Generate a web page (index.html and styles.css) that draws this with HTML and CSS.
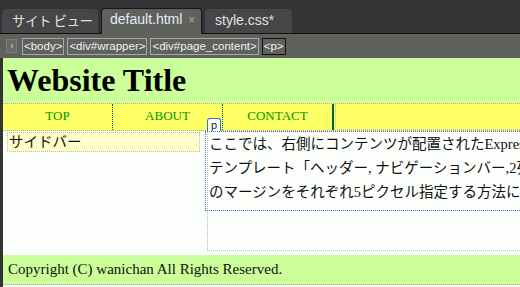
FILE: index.html
```html
<!DOCTYPE html>
<html lang="ja">
<head>
  <meta charset="UTF-8" />
  <title>default.html</title>
  <link rel="stylesheet" href="styles.css">
</head>
<body>
  <div class="tabs">
    <div class="tab tab-site">サイト ビュー</div>
    <div class="tab tab-active">default.html <span class="close">×</span></div>
    <div class="tab tab-css">style.css*</div>
  </div>

  <div class="crumbs">
    <span class="crumb-back"></span>
    <span class="crumb">&lt;body&gt;</span>
    <span class="crumb">&lt;div#wrapper&gt;</span>
    <span class="crumb">&lt;div#page_content&gt;</span>
    <span class="crumb crumb-current">&lt;p&gt;</span>
  </div>

  <!-- design view -->
  <div class="design">
    <div class="site-header">
      <h1>Website Title</h1>
    </div>

    <ul class="nav">
      <li>TOP</li>
      <li>ABOUT</li>
      <li class="nav-current">CONTACT</li>
      <li class="nav-rest"></li>
    </ul>

    <div class="columns">
      <div class="side-col">
        <div class="sidebar">サイドバー</div>
      </div>
      <div class="content">
        <p>
          <span class="tag">p</span>
          ここでは、右側にコンテンツが配置されたExpression Webの<br>
          テンプレート「ヘッダー, ナビゲーションバー,2列, フッター」<br>
          のマージンをそれぞれ5ピクセル指定する方法について説明します。
        </p>
      </div>
    </div>

    <div class="site-footer">Copyright (C) wanichan All Rights Reserved.</div>
  </div>
</body>
</html>
```

FILE: styles.css
```css
* {
  box-sizing: border-box;
}

body {
  margin: 0;
  width: 520px;
  height: 287px;
  overflow: hidden;
  background: #333235;
  font-family: 'Liberation Sans', Arial, sans-serif;
}

/* tab strip */
.tabs {
  display: flex;
  align-items: flex-end;
  gap: 3px;
  height: 33px;
  padding-left: 2px;
}

.tab {
  height: 24px;
  line-height: 23px;
  padding: 0 10px;
  background: #464548;
  color: #e2e2e2;
  font-size: 14px;
  border-radius: 4px 4px 0 0;
  white-space: nowrap;
}

.tab-site {
  width: 96px;
  font-family: 'Noto Sans CJK JP', sans-serif;
  font-size: 13.5px;
  letter-spacing: -0.5px;
}

.tab-active {
  position: relative;
  z-index: 1;
  width: 101px;
  height: 26px;
  line-height: 21px;
  margin-bottom: -1px;
  padding-left: 8px;
  background: #5f615c;
  color: #e4ecf4;
  border: 1px solid #161616;
  border-bottom: none;
}

.close {
  color: #a8a8a8;
  font-size: 12px;
  margin-left: 2px;
}

.tab-css {
  width: 87px;
}

/* breadcrumb bar */
.crumbs {
  display: flex;
  align-items: center;
  gap: 3px;
  height: 25px;
  padding-left: 6px;
  background: #5f615c;
  border-top: 1px solid #111;
}

.crumb-back {
  display: flex;
  align-items: center;
  justify-content: center;
  width: 11px;
  height: 14px;
  margin-right: 2px;
  background: #686a65;
  border: 1px solid #7b7d78;
}

.crumb-back::before {
  content: '';
  margin-left: -3px;
  border: 3px solid transparent;
  border-right-color: #a0a0a0;
}

.crumb {
  border: 1px solid #a8a8a8;
  padding: 0 1px;
  color: #f2f2f2;
  font-size: 11.5px;
  line-height: 15px;
}

.crumb-current {
  border-color: #111;
}

/* page in design view */
.design {
  height: 229px;
  margin-left: 3px;
  overflow: hidden;
  background: #fcfffc;
}

.site-header {
  height: 45px;
  background: #ccff99;
}

.site-header h1 {
  margin: 0;
  padding-left: 4px;
  font: bold 32px/45px 'Liberation Serif', serif;
  color: #000;
}

.nav {
  display: flex;
  height: 28px;
  margin: 0;
  padding: 0;
  list-style: none;
  background: #ffff66;
  border-top: 1px dotted #aaa;
  border-bottom: 1px dotted #aaa;
}

.nav li {
  flex-shrink: 0;
  width: 110px;
  border-right: 1px dotted #006600;
  text-align: center;
  font: 13px/24px 'Liberation Serif', serif;
  color: #009900;
}

.nav .nav-current {
  width: 111px;
  border-right: 2px solid #006600;
}

.nav .nav-rest {
  flex: 1;
  margin-left: 1px;
  border-right: none;
  border-left: 1px dotted #bbb;
  border-bottom: 1px dotted #bbb;
}

.columns {
  display: flex;
  height: 120px;
}

.side-col {
  flex-shrink: 0;
  width: 204px;
  padding: 1px 7px 0 4px;
}

.sidebar {
  padding-left: 1px;
  background: #ffffcc;
  border: 1px dotted #bbb;
  font: 14.5px/18px 'Liberation Serif', 'Noto Sans CJK JP', serif;
  color: #111;
}

.content {
  flex: 1;
  min-width: 0;
  border: 1px dotted #bbb;
  border-right: none;
}

.content p {
  position: relative;
  margin: -1px 0 0 -3px;
  padding: 0 0 6px 3px;
  border: 1px dotted #3a6fd8;
  border-right: none;
  font: 14.5px/24px 'Liberation Serif', 'Noto Sans CJK JP', serif;
  color: #111;
  white-space: nowrap;
}

.tag {
  position: absolute;
  left: 1px;
  top: -14px;
  width: 14px;
  height: 13px;
  background: #fff;
  border: 1px solid #3a6fd8;
  border-bottom: none;
  border-radius: 3px 3px 0 0;
  text-align: center;
  font: 11px/12px 'Liberation Sans', sans-serif;
  color: #222;
}

.site-footer {
  height: 30px;
  margin-top: 4px;
  padding-left: 5px;
  background: #ccff99;
  border-bottom: 1px dotted #aaa;
  font: 15px/29px 'Liberation Serif', serif;
  color: #111;
}
```
